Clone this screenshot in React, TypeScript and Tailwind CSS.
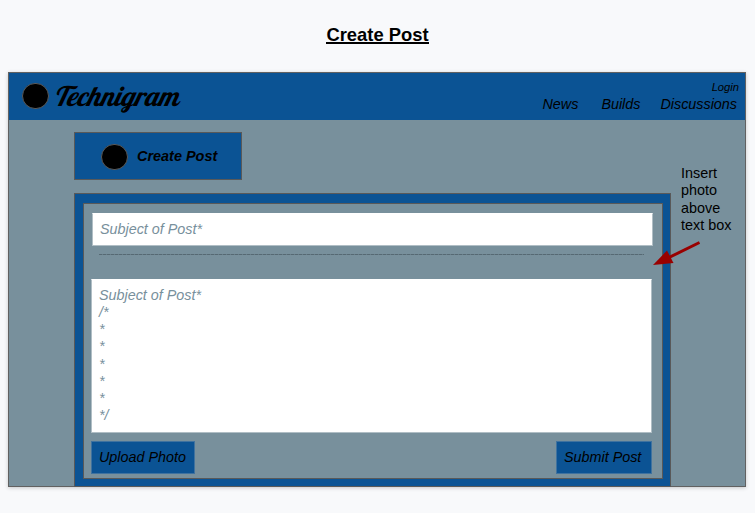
const textLines = ["Subject of Post*", "/*", "*", "*", "*", "*", "*", "*/"];

function Dot() {
  return <span className="block h-[26px] w-[27px] shrink-0 rounded-full border border-[#595959] bg-black" />;
}

function Header() {
  return (
    <header className="flex h-[47px] items-start bg-[#0b5394] pl-[13.4px]">
      <div className="pt-[10.4px]">
        <Dot />
      </div>
      <span className="ml-[4px] pt-[5px] font-['Lobster','Liberation_Serif',cursive] text-[27.2px] leading-[36px] tracking-[-0.25px] whitespace-nowrap italic">
        Technigram
      </span>
      <div className="ml-auto flex flex-col items-end pt-[7px] pr-[6px] italic">
        <span className="text-[11.2px] leading-[15px]">Login</span>
        <nav className="flex gap-[20px] pr-[2px] text-[14.35px] leading-[18px]">
          <a className="mr-[3px]">News</a>
          <a>Builds</a>
          <a>Discussions</a>
        </nav>
      </div>
    </header>
  );
}

function ActionButton({ label, size }: { label: string; size: string }) {
  return (
    <button
      className={`flex h-[33px] items-center border border-[#3f729f] bg-[#0b5394] pl-[7px] text-[14.35px] whitespace-nowrap italic ${size}`}
    >
      {label}
    </button>
  );
}

function PostForm() {
  return (
    <section className="mt-[13px] h-[294px] w-[597px] border border-[#595959] bg-[#0b5394] pt-[9px] pr-[7px] pb-[7px] pl-[8px]">
      <div className="h-[276px] border border-[#595959] bg-[#78909c] pt-[9px] pl-[7px]">
        <div className="ml-[1px] flex h-[33px] w-[561px] items-center border border-[#b0bec5] border-t-white bg-white pl-[7px] text-[14.35px] text-[#78909c] italic">
          Subject of Post*
        </div>
        <div className="mt-[8px] ml-[8px] h-[1px] w-[545px] bg-[repeating-linear-gradient(90deg,#566973_0_3px,#687e89_3px_4px)]" />
        <div className="mt-[24px] h-[154px] w-[561px] border border-[#b0bec5] border-t-white bg-white pt-[7px] pl-[7px] text-[14.35px] leading-[17.15px] text-[#78909c] italic">
          {textLines.map((line, i) => (
            <div key={i}>{line}</div>
          ))}
        </div>
        <div className="mt-[8px] flex w-[561px] justify-between">
          <ActionButton label="Upload Photo" size="w-[104px]" />
          <ActionButton label="Submit Post" size="w-[96px]" />
        </div>
      </div>
    </section>
  );
}

function Note() {
  return (
    <aside className="relative ml-[10px] pt-[45px] text-[14.4px] leading-[17.3px]">
      Insert
      <br />
      photo
      <br />
      above
      <br />
      text box
      <svg className="absolute top-[120px] left-[-29px] h-[28px] w-[50px]" viewBox="0 0 50 28">
        <path d="M47.5 2.5 16 18" stroke="#990000" strokeWidth="3" />
        <path d="M1 25 15 10.5 21.5 23Z" fill="#990000" />
      </svg>
    </aside>
  );
}

export default function App() {
  return (
    <div className="h-[513px] w-[755px] overflow-hidden bg-[#f8f9fb] font-['Liberation_Sans',Arial,sans-serif] text-black">
      <h1 className="flex h-[72px] justify-center pt-[24px] text-[18.4px] leading-[21px] font-bold">
        <span className="h-[20px] border-b-2 border-black">Create Post</span>
      </h1>
      <main className="ml-[8px] h-[415px] w-[738px] border border-[#616161] bg-[#78909c] shadow-[0_1px_4px_rgba(0,0,0,0.2)]">
        <Header />
        <div className="flex pl-[65px]">
          <div className="pt-[12px]">
            <div className="flex h-[48px] w-[168px] items-center border border-[#595959] bg-[#0b5394] pt-[1px] pl-[26px]">
              <Dot />
              <span className="ml-[9px] pt-[1px] text-[14.45px] font-bold whitespace-nowrap italic">Create Post</span>
            </div>
            <PostForm />
          </div>
          <Note />
        </div>
      </main>
    </div>
  );
}
